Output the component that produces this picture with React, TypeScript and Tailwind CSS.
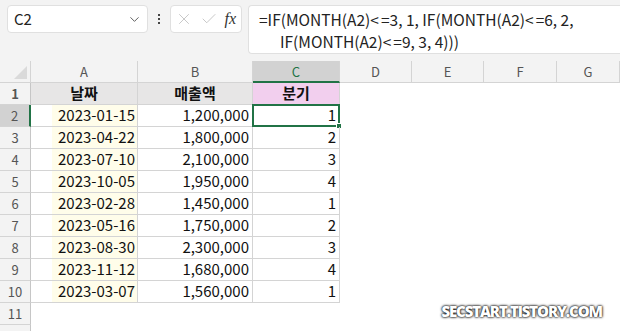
import { ChevronDown, X, Check } from 'lucide-react';

const cols = [
  { label: 'A', w: 'w-[107px]' },
  { label: 'B', w: 'w-[115px]' },
  { label: 'C', w: 'w-[87px]' },
  { label: 'D', w: 'w-[72px]' },
  { label: 'E', w: 'w-[72px]' },
  { label: 'F', w: 'w-[73px]' },
  { label: 'G', w: 'w-[63px]' }
];

const rows = [
  ['2023-01-15', '1,200,000', '1'],
  ['2023-04-22', '1,800,000', '2'],
  ['2023-07-10', '2,100,000', '3'],
  ['2023-10-05', '1,950,000', '4'],
  ['2023-02-28', '1,450,000', '1'],
  ['2023-05-16', '1,750,000', '2'],
  ['2023-08-30', '2,300,000', '3'],
  ['2023-11-12', '1,680,000', '4'],
  ['2023-03-07', '1,560,000', '1']
];

const font = 'font-["Noto_Sans_CJK_KR","Noto_Sans",sans-serif]';

// Excel draws "<=" with a visible gap between the two signs
function Le() {
  return (
    <>
      <span className="mr-[2px]">&lt;</span>=
    </>
  );
}

function FormulaBar() {
  return (
    <div className="flex h-[61px] items-start bg-[#f3f3f3] pt-[5px]">
      <div className="ml-[7px] flex h-[28px] w-[141px] items-center justify-between rounded-[4px] border border-[#e0e0e0] bg-white pr-[5px] pl-[6px] text-[15px] text-[#222]">
        <span>C2</span>
        <ChevronDown size={15} strokeWidth={1.5} className="text-[#555]" />
      </div>
      <div className="flex h-[28px] w-[22px] flex-col items-center justify-center gap-[2px]">
        <span className="h-[2px] w-[2px] bg-[#444]" />
        <span className="h-[2px] w-[2px] bg-[#444]" />
        <span className="h-[2px] w-[2px] bg-[#444]" />
      </div>
      <div className="flex h-[28px] w-[72px] items-center justify-between rounded-[4px] border border-[#e0e0e0] bg-white px-[4px]">
        <X size={18} strokeWidth={1} className="text-[#b5b5b5]" />
        <Check size={18} strokeWidth={1} className="text-[#b5b5b5]" />
        <span className="pr-[1px] font-['Liberation_Serif',serif] text-[16px] italic text-[#333]">fx</span>
      </div>
      <div className="ml-[6px] h-[49px] flex-1 rounded-l-[4px] border border-r-0 border-[#e0e0e0] bg-white pt-[2px] pl-[10px] text-[15.5px] leading-[22px] text-[#222]">
        <div>
          =IF(MONTH(A2)<Le />3, 1, IF(MONTH(A2)<Le />6, 2,
        </div>
        <div className="pl-[21px]">
          IF(MONTH(A2)<Le />9, 3, 4)))
        </div>
      </div>
    </div>
  );
}

function ColumnHeader() {
  return (
    <div className="flex h-[22px] bg-[#f3f3f3] text-[13px] text-[#555]">
      <div className="relative w-[31px] shrink-0 border-r border-b border-[#d4d4d4]">
        <div className="absolute right-[3px] bottom-[3px] h-0 w-0 border-b-[13px] border-l-[13px] border-b-[#dadada] border-l-transparent" />
      </div>
      {cols.map((c) => (
        <div
          key={c.label}
          className={`${c.w} flex shrink-0 items-center justify-center border-r ${
            c.label === 'C'
              ? 'border-b-2 border-r-[#d4d4d4] border-b-[#217346] bg-[#d2d2d2] pt-[2px] text-[#217346]'
              : 'border-b border-[#d4d4d4]'
          }`}
        >
          {c.label}
        </div>
      ))}
    </div>
  );
}

function RowHeader({ n }: { n: number }) {
  const active = n === 2;
  return (
    <div
      className={`flex w-[31px] shrink-0 items-center justify-center border-b border-[#d4d4d4] text-[13px] text-[#555] ${
        active ? 'border-r-2 border-r-[#217346] bg-[#d2d2d2]' : 'border-r border-r-[#c6c6c6] bg-[#f3f3f3]'
      }`}
    >
      {n}
    </div>
  );
}

function EmptyCells({ from }: { from: number }) {
  return (
    <>
      {cols.slice(from).map((c) => (
        <div key={c.label} className={`${c.w} shrink-0`} />
      ))}
    </>
  );
}

export default function App() {
  return (
    <div className={`relative h-[331px] w-[620px] overflow-hidden bg-white ${font}`}>
      <FormulaBar />
      <ColumnHeader />
      <div className="flex h-[22px] text-[15px] font-bold text-[#111]">
        <RowHeader n={1} />
        <div className="flex w-[107px] shrink-0 items-center justify-center border-r border-b border-[#d4d4d4] bg-[#e7e6e6]">날짜</div>
        <div className="flex w-[115px] shrink-0 items-center justify-center border-r border-b border-[#d4d4d4] bg-[#e7e6e6]">매출액</div>
        <div className="flex w-[87px] shrink-0 items-center justify-center border-r border-b border-[#d4d4d4] bg-[#f2cfee]">분기</div>
        <EmptyCells from={3} />
      </div>
      {rows.map((r, i) => (
        <div key={i} className="flex h-[22px] text-[15px] text-[#111]">
          <RowHeader n={i + 2} />
          <div className="flex w-[107px] shrink-0 border-r border-b border-[#d4d4d4] bg-white">
            <div className="ml-[21px] flex flex-1 items-center justify-end bg-[#fffdea] pr-[2px]">{r[0]}</div>
          </div>
          <div className="flex w-[115px] shrink-0 items-center justify-end border-r border-b border-[#d4d4d4] pr-[3px]">{r[1]}</div>
          <div className="relative flex w-[87px] shrink-0 items-center justify-end border-r border-b border-[#d4d4d4] pr-[3px]">
            {r[2]}
            {i === 0 && (
              <>
                <div className="absolute -top-[1px] -left-[1px] h-[23px] w-[88px] border-2 border-[#217346]" />
                <div className="absolute -right-[3px] -bottom-[3px] h-[6px] w-[6px] border border-white bg-[#217346]" />
              </>
            )}
          </div>
          <EmptyCells from={3} />
        </div>
      ))}
      <div className="flex h-[22px]">
        <RowHeader n={11} />
      </div>
      <div className="flex h-[10px]">
        <div className="w-[31px] border-r border-[#c6c6c6] bg-[#f3f3f3]" />
      </div>
      <div className="absolute right-[18px] bottom-[9px] font-['Open_Sans',sans-serif] text-[15px] font-extrabold tracking-[-1.1px] text-white [text-shadow:0_0_3px_#000,0_0_2px_#000]">
        SECSTART.TISTORY.COM
      </div>
    </div>
  );
}
